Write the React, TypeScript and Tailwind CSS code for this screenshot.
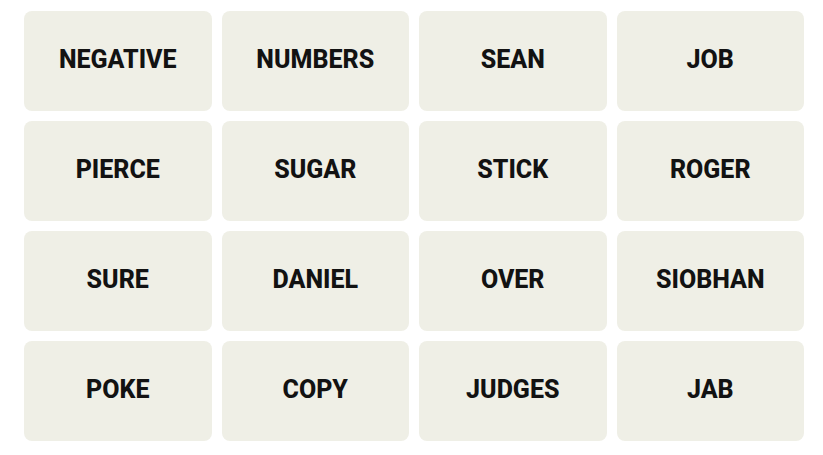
const words = [
  "NEGATIVE", "NUMBERS", "SEAN", "JOB",
  "PIERCE", "SUGAR", "STICK", "ROGER",
  "SURE", "DANIEL", "OVER", "SIOBHAN",
  "POKE", "COPY", "JUDGES", "JAB",
];

export default function App() {
  return (
    <main className="bg-white pt-[11px] pr-[19px] pb-[14px] pl-6">
      <div className="grid grid-cols-4 gap-[10px]">
        {words.map((word) => (
          <button
            key={word}
            type="button"
            className="flex h-[100px] items-center justify-center rounded-lg bg-[#efefe6] pb-0.5 font-['Roboto',sans-serif] text-[25px] leading-8 font-extrabold text-[#121212]"
          >
            {word}
          </button>
        ))}
      </div>
    </main>
  );
}
